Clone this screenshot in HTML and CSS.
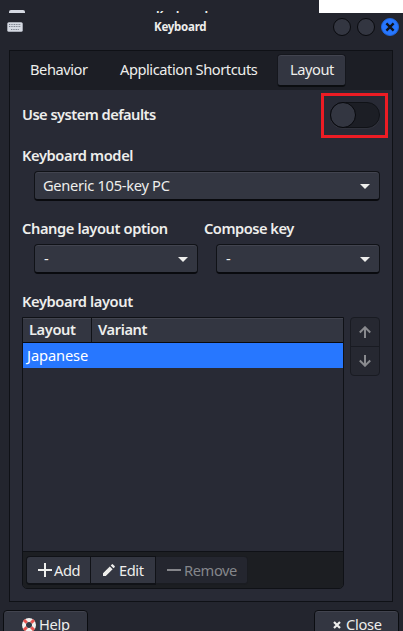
FILE: index.html
```html
<!DOCTYPE html>
<html lang="en">
<head>
<meta charset="utf-8">
<title>Keyboard</title>
<link rel="stylesheet" href="styles.css">
</head>
<body>
<div class="window">
  <header class="titlebar">
    <div class="ghost"><i class="ghost-icon"></i><span class="ghost-title">Keyboard</span></div>
    <div class="blank"></div>
    <svg class="kbd" width="16" height="10" viewBox="0 0 16 10"><rect x=".3" y=".3" width="15.4" height="9.4" rx="1.5" fill="#d5d9e2"/><path d="M2 2.5h12M2 4.5h12M4 7.5h8" stroke="#777d89" stroke-dasharray="1 .7"/></svg>
    <h1 class="title">Keyboard</h1>
    <div class="controls">
      <i class="dot"></i><i class="dot"></i>
      <i class="dot close"><svg width="10" height="10" viewBox="0 0 10 10"><path d="M1.4 1.4l7.2 7.2M8.6 1.4l-7.2 7.2" stroke="#10131b" stroke-width="2.4"/></svg></i>
    </div>
  </header>
  <main class="frame">
    <nav class="tabs">
      <span class="tab t1">Behavior</span><span class="tab t2">Application Shortcuts</span><span class="tab active">Layout</span>
    </nav>
    <section class="page">
      <div class="defaults"><b>Use system defaults</b><div class="mark"><div class="switch"><i class="knob"></i></div></div></div>
      <b class="label model-label">Keyboard model</b>
      <div class="select model"><span class="model-text">Generic 105-key PC</span><i class="arrow"></i></div>
      <div class="pair">
        <div class="field"><b class="label change-label">Change layout option</b><div class="select"><span>-</span><i class="arrow"></i></div></div>
        <div class="field"><b class="label compose-label">Compose key</b><div class="select"><span>-</span><i class="arrow"></i></div></div>
      </div>
      <b class="label layout-label">Keyboard layout</b>
      <div class="list-row">
        <div class="list">
          <div class="head"><b class="c1">Layout</b><b class="c2">Variant</b></div>
          <div class="selected">Japanese</div>
          <div class="empty"></div>
          <div class="tools">
            <div class="tool add"><svg width="14" height="14" viewBox="0 0 14 14"><path d="M7 0v14M0 7h14" stroke="#eeeeec" stroke-width="2"/></svg><span>Add</span></div>
            <div class="tool edit"><svg width="12" height="12" viewBox="0 0 12 12"><path d="M0 12V9.2L6.8 2.4l2.8 2.8L2.8 12zM7.7 1.5L8.8.4q.6-.6 1.2 0L11.6 2q.6.6 0 1.2l-1.1 1.1z" fill="#eeeeec"/></svg><span>Edit</span></div>
            <div class="tool remove"><svg width="14" height="14" viewBox="0 0 14 14"><path d="M0 7h14" stroke="#85868b" stroke-width="2"/></svg><span>Remove</span></div>
          </div>
        </div>
        <div class="movers">
          <div class="mover"><svg width="12" height="12" viewBox="0 0 12 12"><path d="M6 12V1M.8 6.500L6 1.300l5.200 5.200" fill="none" stroke="#898a8e" stroke-width="2"/></svg></div>
          <div class="mover"><svg width="12" height="12" viewBox="0 0 12 12"><path d="M6 0v11M.8 5.500L6 10.700l5.200-5.200" fill="none" stroke="#898a8e" stroke-width="2"/></svg></div>
        </div>
      </div>
    </section>
  </main>
  <footer class="actions">
    <div class="action help"><svg width="14" height="14" viewBox="0 0 14 14"><circle cx="7" cy="7" r="5" fill="none" stroke="#f2f1ef" stroke-width="4"/><path d="M2 2l2.8 2.8M12 2L9.2 4.8M2 12l2.8-2.8M12 12L9.2 9.2" stroke="#e85450" stroke-width="3"/></svg><span>Help</span></div>
    <div class="action shut"><svg width="8" height="8" viewBox="0 0 8 8"><path d="M1 1l6 6M7 1L1 7" stroke="#eeeeec" stroke-width="2.2"/></svg><span>Close</span></div>
  </footer>
</div>
</body>
</html>
```
FILE: styles.css
```css
* { box-sizing: border-box; }
body { margin: 0; overflow: hidden; background: #23252e; color: #eeeeec; font: 14.67px/20px "Noto Sans", sans-serif; letter-spacing: -.3px; }
b { font-weight: 600; letter-spacing: -.4px; }
svg { display: block; flex: none; }
.window { width: 403px; height: 631px; overflow: hidden; }
.titlebar { position: relative; height: 50px; letter-spacing: 0; }
.ghost { position: absolute; left: 0; top: 9px; width: 319px; height: 4px; overflow: hidden; }
.ghost-icon { position: absolute; left: 9px; top: 1px; width: 16px; height: 3px; border-radius: 2px 2px 0 0; background: #d5d9e2; }
.ghost-title { position: absolute; left: 156px; top: -2px; font-size: 11px; line-height: 16px; font-weight: 700; }
.blank { position: absolute; right: 0; top: 0; width: 84px; height: 13px; background: #fff; }
.kbd { position: absolute; left: 7px; top: 22px; }
.title { margin: 0; padding: 19px 0 0 154px; font-size: 11.5px; line-height: 16px; font-weight: 700; letter-spacing: -.25px; }
.controls { position: absolute; right: 4px; top: 18px; display: flex; gap: 6px; }
.dot { width: 18px; height: 18px; border: 1px solid #090a0e; border-radius: 50%; background: #333641; display: flex; align-items: center; justify-content: center; }
.close { background: #2777ff; border-color: #1f65dc; }
.frame { margin: 0 10px 0 9px; height: 552px; border: 1px solid #0f1116; background: #282a35; }
.tabs { height: 39px; background: #1c1e25; display: flex; padding: 3px 0 0 6px; letter-spacing: -.45px; }
.tab { height: 33px; line-height: 31px; padding-left: 14px; white-space: nowrap; }
.t1 { width: 90px; }
.t2 { width: 171px; }
.active { width: 69px; padding-left: 12px; line-height: 29px; border: 1px solid #15171d; border-bottom: 2px solid #0b0d10; border-radius: 4px; background: #333641; box-shadow: inset 0 1px #42444f; }
.page { padding: 0 12px; }
.defaults { height: 50px; display: flex; justify-content: space-between; }
.defaults b { margin-top: 14px; letter-spacing: -.54px; }
.mark { width: 67px; height: 45px; margin: 3px -8px 0 0; border: 3px solid #ed1c24; padding: 6px; }
.switch { width: 50px; height: 26px; border: 1px solid #101217; border-radius: 13px; background: #1c1e25; box-shadow: 0 1px #30323c; }
.knob { display: block; margin: -1px; width: 26px; height: 26px; border: 1px solid #08090d; border-radius: 50%; background: #333641; }
.label { display: block; height: 20px; line-height: 18px; white-space: nowrap; }
.model-label { margin-top: 6px; }
.select { height: 30px; margin-left: 12px; padding: 0 9px 0 8px; border: 1px solid #101217; border-bottom: 2px solid #090a0e; border-radius: 4px; background: #333641; box-shadow: inset 0 1px #42444f; display: flex; align-items: center; justify-content: space-between; }
.select span { line-height: 18px; padding-bottom: 2px; }
.arrow { border: 5px solid transparent; border-top-color: #eeeeec; border-bottom: 0; margin-top: 1px; }
.model { margin-top: 5px; }
.pair { display: grid; grid-template-columns: 176px 176px; gap: 6px; margin-top: 18px; }
.field .select { margin-top: 5px; }
.field .select span { padding-left: 1px; }
.compose-label { letter-spacing: -.5px; }
.layout-label { margin-top: 18px; }
.list-row { display: flex; gap: 6px; margin-top: 5px; align-items: flex-start; }
.list { width: 322px; height: 272px; border: 1px solid #0f1116; border-radius: 0 0 5px 5px; overflow: hidden; display: flex; flex-direction: column; }
.head { height: 25px; background: #333641; border-bottom: 1px solid #090a0e; box-shadow: inset 0 1px #42444f; display: flex; line-height: 22px; }
.c1 { width: 69px; padding-left: 6px; border-right: 1px solid #0f1116; }
.c2 { padding-left: 6px; }
.selected { height: 25px; background: #2777ff; padding-left: 4px; line-height: 25px; color: #fff; letter-spacing: -.12px; }
.empty { flex: 1; }
.tools { height: 37px; border-top: 1px solid #0f1116; background: #1c1e22; display: flex; padding: 4px 0 0 3px; }
.tool { height: 29px; background: #333641; border: solid #101217; border-width: 1px 1px 2px 0; display: flex; align-items: center; letter-spacing: -.4px; }
.tool span { padding-bottom: 1px; }
.add { width: 65px; border-left-width: 1px; border-radius: 4px 0 0 4px; padding-left: 11px; gap: 2px; }
.edit { width: 65px; padding-left: 12px; gap: 4px; }
.remove { width: 92px; background: #24262f; border-color: #1a1c21; border-radius: 0 4px 4px 0; color: #85868b; padding-left: 11px; gap: 3px; }
.movers { width: 30px; height: 59px; border: 1px solid #191b22; border-radius: 4px; background: #262831; }
.mover { height: 28px; display: flex; align-items: center; justify-content: center; }
.mover + .mover { height: 29px; border-top: 1px solid #191b22; }
.actions { display: flex; justify-content: space-between; padding: 8px 4px 0 3px; }
.action { width: 85px; height: 30px; border: 1px solid #0b0d11; border-radius: 4px; background: #333641; box-shadow: inset 0 1px #42444f; display: flex; align-items: center; }
.action span { padding-bottom: 2px; }
.help { padding-left: 18px; gap: 3px; }
.shut { padding-left: 18px; gap: 5px; }
```
